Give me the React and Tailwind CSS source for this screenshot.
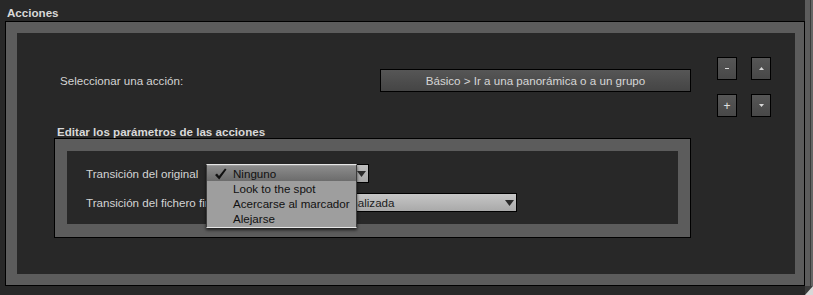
import React from 'react';

const FONT = "font-['Liberation_Sans',Arial,sans-serif]";

function Arrow({ up = false, className = '' }) {
  return (
    <svg width="9" height="6" viewBox="0 0 9 6" className={className}>
      <path d={up ? 'M0 6 L4.5 0 L9 6 Z' : 'M0 0 L9 0 L4.5 6 Z'} fill="currentColor" />
    </svg>
  );
}

function SmallButton({ children }) {
  return (
    <div className="flex h-[23px] w-[20px] items-center justify-center border border-black bg-gradient-to-b from-[#565656] to-[#484848] text-[#d0d0d0]">
      {children}
    </div>
  );
}

function Check() {
  return (
    <svg width="13" height="12" viewBox="0 0 13 12">
      <path d="M1 7 L3 5.5 L5 8 L11 0.5 L12.5 1.5 L5.2 11.5 Z" fill="#111" />
    </svg>
  );
}

const ITEMS = ['Ninguno', 'Look to the spot', 'Acercarse al marcador', 'Alejarse'];

function Menu() {
  return (
    <div className="absolute -left-px -top-px z-10 w-[151px] border-y border-x border-y-[#e6e6e6] border-x-[#3c3c3c] bg-[#9e9e9e] py-px shadow-[0_2px_3px_rgba(0,0,0,0.7)]">
      {ITEMS.map((item, i) => (
        <div
          key={item}
          className={
            'flex h-[15px] items-center text-[11.6px] leading-none text-[#111] ' +
            (i === 0 ? 'bg-gradient-to-b from-[#8c8c8c] to-[#6c6c6c]' : '')
          }
        >
          <span className="flex w-[26px] justify-center pl-[1px]">{i === 0 && <Check />}</span>
          {item}
        </div>
      ))}
    </div>
  );
}

export default function App() {
  return (
    <div className={`flex h-[295px] w-[813px] overflow-hidden bg-[#282828] ${FONT}`}>
      <div className="flex w-[805px] flex-col">
        <div className="h-[21px] pl-[7px] pt-[6px] text-[11.6px] font-bold leading-[13px] text-[#d8d8d8]">
          Acciones
        </div>
        <div className="ml-[5px] h-[265px] border border-black bg-[#5c5c5c] pb-[11px] pl-[11px] pr-[9px] pt-[11px]">
          <div className="h-full bg-[#282828] pt-[24px]">
            <div className="flex items-start">
              <div className="mt-[12px] flex h-[23px] items-center">
                <div className="w-[363px] pl-[43px] text-[11.6px] text-[#d4d4d4]">Seleccionar una acción:</div>
                <div className="flex h-[23px] w-[311px] items-center justify-center border border-black bg-gradient-to-b from-[#565656] to-[#454545] text-[11.6px] text-[#d6d6d6]">
                  Básico &gt; Ir a una panorámica o a un grupo
                </div>
              </div>
              <div className="ml-[26px] grid grid-cols-[20px_20px] gap-x-[14px] gap-y-[14px]">
                <SmallButton>
                  <span className="h-[1.5px] w-[4px] bg-[#d8d8d8]" />
                </SmallButton>
                <SmallButton>
                  <svg width="5" height="3" viewBox="0 0 5 3">
                    <path d="M0 3 L2.5 0 L5 3 Z" fill="#d8d8d8" />
                  </svg>
                </SmallButton>
                <SmallButton>
                  <span className="text-[12px] leading-none text-[#e0e0e0]">+</span>
                </SmallButton>
                <SmallButton>
                  <svg width="5" height="3" viewBox="0 0 5 3">
                    <path d="M0 0 L5 0 L2.5 3 Z" fill="#d8d8d8" />
                  </svg>
                </SmallButton>
              </div>
            </div>

            <div className="mt-[8px] h-[13px] pl-[40px] text-[11.6px] font-bold leading-[13px] text-[#d8d8d8]">
              Editar los parámetros de las acciones
            </div>
            <div className="ml-[37px] h-[100px] w-[637px] border border-black bg-[#5c5c5c] px-[12px] pb-[13px] pt-[12px]">
              <div className="h-full bg-[#282828] pt-[13px]">
                <div className="flex h-[19px] items-center">
                  <div className="w-[139px] pl-[19px] text-[11.6px] text-[#d4d4d4]">Transición del original</div>
                  <div className="relative flex h-[19px] w-[163px] items-center justify-end border border-black bg-gradient-to-b from-[#bdbdbd] to-[#a6a6a6] pr-[2px] text-[#2a2a2a]">
                    <Arrow />
                    <Menu />
                  </div>
                </div>
                <div className="mt-[10px] flex h-[19px] items-center">
                  <div className="w-[160px] whitespace-nowrap pl-[19px] text-[11.6px] text-[#d4d4d4]">
                    Transición del fichero final
                  </div>
                  <div className="flex h-[19px] w-[290px] items-center justify-between border border-black bg-gradient-to-b from-[#c6c6c6] to-[#a9a9a9] pl-[93px] pr-[2px] text-[11.6px] text-[#1c1c1c]">
                    <span>Personalizada</span>
                    <Arrow className="text-[#2a2a2a]" />
                  </div>
                </div>
              </div>
            </div>
          </div>
        </div>
      </div>
      <div className="flex w-[8px] flex-col">
        <div className="flex flex-1">
          <div className="w-[5px] bg-[#5c5c5c]" />
          <div className="w-px bg-[#3a3a3a]" />
          <div className="w-[2px] bg-[#666666]" />
        </div>
        <svg width="8" height="9" viewBox="0 0 8 9" className="block">
          <rect width="8" height="9" fill="#3a3a3a" />
          <path d="M8 0 L8 9 L0 9 Z" fill="#d8d8d8" />
        </svg>
      </div>
    </div>
  );
}
